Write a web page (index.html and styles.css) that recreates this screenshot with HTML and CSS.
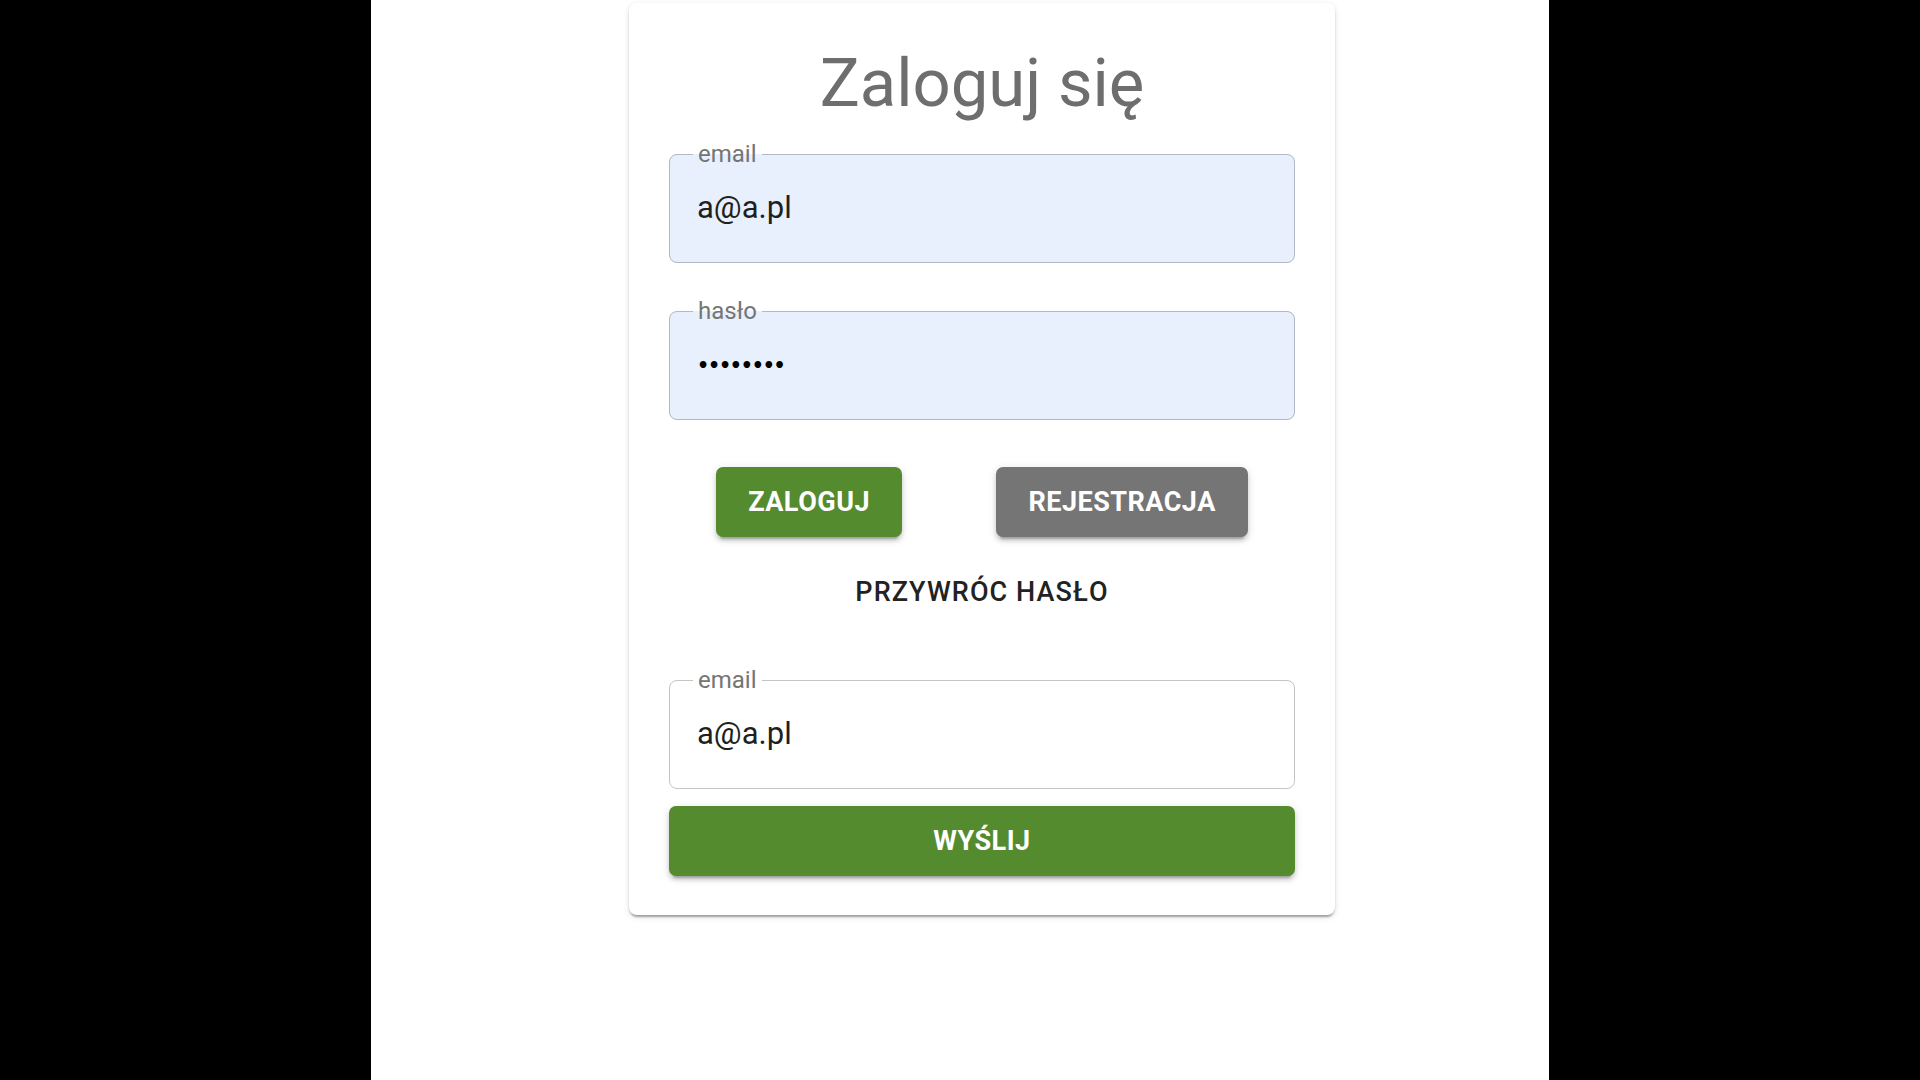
FILE: index.html
```html
<!DOCTYPE html>
<html lang="pl">
<head>
<meta charset="utf-8">
<title>Zaloguj się</title>
<link rel="stylesheet" href="styles.css">
</head>
<body>
<main class="page">
  <section class="card">
    <h1 class="title">Zaloguj się</h1>
    <fieldset class="field field-autofill">
      <legend class="field-label">email</legend>
      <div class="field-value">a@a.pl</div>
    </fieldset>
    <fieldset class="field field-autofill field-gap">
      <legend class="field-label">hasło</legend>
      <div class="field-value field-password">••••••••</div>
    </fieldset>
    <div class="actions">
      <button class="btn btn-green">Zaloguj</button>
      <button class="btn btn-grey">Rejestracja</button>
    </div>
    <button class="btn-text">Przywróc hasło</button>
    <fieldset class="field field-reset">
      <legend class="field-label">email</legend>
      <div class="field-value">a@a.pl</div>
    </fieldset>
    <button class="btn btn-green btn-full">Wyślij</button>
  </section>
</main>
</body>
</html>
```
FILE: styles.css
```css
html, body {
  margin: 0;
  padding: 0;
  height: 100%;
}
body {
  background: #000;
  font-family: Roboto, "Noto Sans", "Liberation Sans", sans-serif;
}
.page {
  width: 1178px;
  height: 1080px;
  margin: 0 auto;
  background: #fff;
  box-sizing: border-box;
  padding: 3px 0 0 44px;
  display: flex;
  justify-content: center;
  align-items: flex-start;
}
.card {
  width: 706px;
  box-sizing: border-box;
  padding: 0 40px 39px;
  background: #fff;
  border-radius: 8px;
  box-shadow: 0 4px 2px -2px rgba(0,0,0,.2), 0 2px 2px 0 rgba(0,0,0,.14), 0 2px 6px 0 rgba(0,0,0,.12);
  display: flex;
  flex-direction: column;
}
.title {
  margin: 39px 0 18px;
  text-align: center;
  font-weight: 400;
  font-size: 67px;
  line-height: 82px;
  color: #6e6e6e;
  letter-spacing: 0;
}
.field {
  margin: 0;
  padding: 0 23px;
  border: 1.5px solid #c4c4c4;
  border-radius: 8px;
  min-width: 0;
}
.field-autofill {
  background: #e8f0fe;
  border-color: #b3b8c2;
}
.field-gap {
  margin-top: 36px;
}
.field-reset {
  margin-top: 41px;
}
.field-label {
  padding: 0 5px;
  font-size: 24px;
  line-height: 24px;
  color: #757575;
}
.field-value {
  padding: 23px 4px 35px;
  font-size: 31px;
  line-height: 38px;
  color: #1f1f1f;
}
.field-password {
  font-size: 19px;
  letter-spacing: -1.2px;
  color: #000;
  font-family: "DejaVu Sans", sans-serif;
  font-weight: bold;
}
.actions {
  margin-top: 47px;
  display: flex;
  justify-content: space-around;
}
.btn {
  border: 0;
  border-radius: 7px;
  padding: 12px 32px;
  font-family: Roboto, "Noto Sans", sans-serif;
  font-weight: 700;
  font-size: 27px;
  line-height: 46px;
  height: 70px;
  letter-spacing: 0.5px;
  text-transform: uppercase;
  color: #fff;
  box-shadow: 0 6px 2px -4px rgba(0,0,0,.2), 0 4px 4px 0 rgba(0,0,0,.14), 0 2px 10px 0 rgba(0,0,0,.12);
}
.btn-green {
  background: #548b2f;
}
.btn-grey {
  background: #757575;
}
.btn-text {
  align-self: center;
  margin-top: 20px;
  border: 0;
  background: transparent;
  padding: 12px 16px;
  font-family: Roboto, "Noto Sans", sans-serif;
  font-weight: 500;
  font-size: 27px;
  line-height: 46px;
  height: 70px;
  letter-spacing: 1.1px;
  text-transform: uppercase;
  color: #222;
}
.btn-full {
  margin-top: 17px;
  width: 100%;
}
```
